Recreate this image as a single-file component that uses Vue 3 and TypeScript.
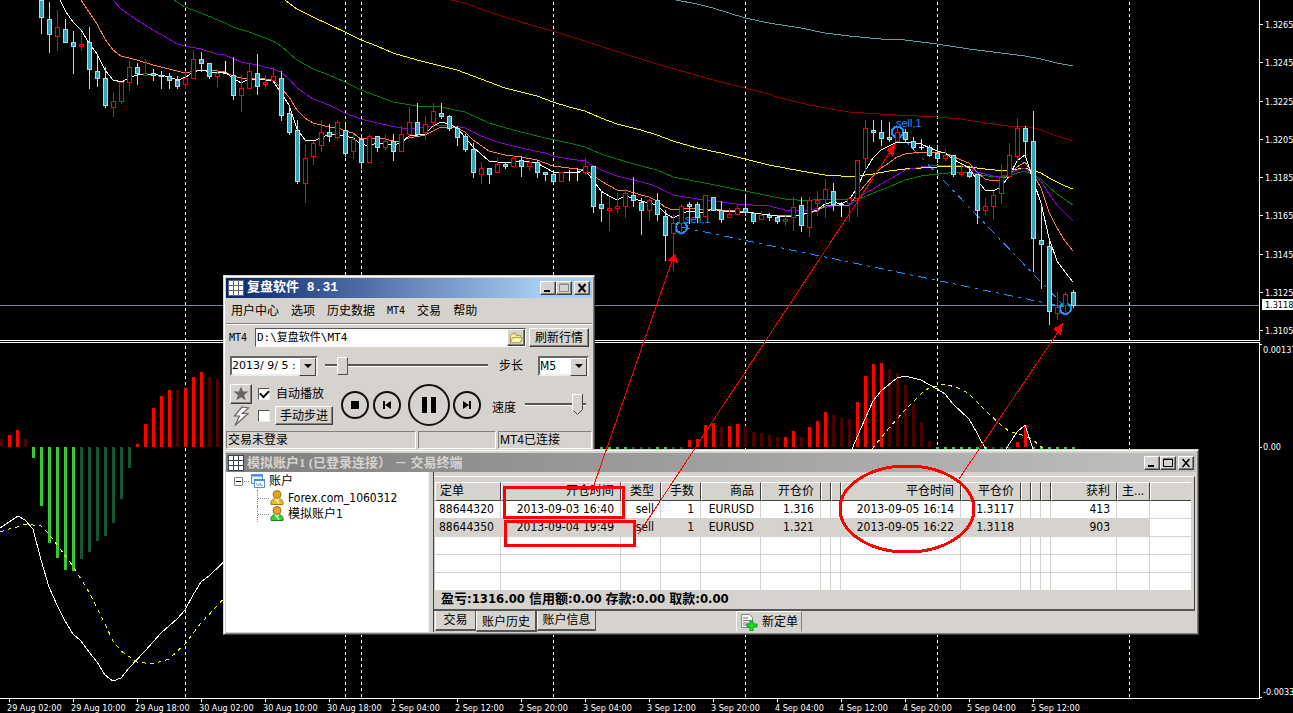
<script setup lang="ts">
import { ref } from 'vue'

type Candle = [x: number, high: number, top: number, bottom: number, low: number, kind: 'r' | 'b' | 'w']
type Bar = [x: number, y: number, kind: string]

const candleSource = `41 0 0 17 33 b;49 2 19 34 52 b;57 10 27 36 50 r;65 19 29 42 42 b;73 31 42 46 73 b;81 33 44 46 50 r;89 27 42 69 88 b;97 55 71 78 86 b;105 67 78 105 107 b;113 92 101 107 116 r;121 82 82 101 103 r;129 61 67 82 90 r;137 63 67 73 84 b;145 59 73 75 75 r;153 69 73 75 80 b;161 71 75 76 88 b;169 73 76 80 88 b;177 76 80 86 88 b;185 71 78 84 88 r;193 50 59 78 78 r;201 52 59 63 71 b;209 63 63 76 78 b;217 69 73 76 86 r;225 61 73 73 73 w;233 57 75 95 99 b;241 75 88 95 111 r;249 63 71 88 88 r;257 54 73 86 94 b;265 75 82 84 88 r;273 67 76 80 80 r;281 71 78 115 120 b;289 105 113 132 134 b;297 120 130 181 183 b;305 145 158 183 202 r;313 141 143 156 164 r;321 120 132 145 151 r;329 124 132 136 141 b;337 120 122 137 139 r;345 125 130 153 156 b;353 134 139 151 158 r;361 136 139 162 168 b;369 134 136 162 162 r;377 136 136 147 151 b;385 134 141 147 149 r;393 134 141 151 160 b;401 126 134 151 151 r;409 107 122 134 136 r;417 103 122 134 136 b;425 116 124 132 139 r;433 103 111 122 128 r;441 103 113 116 118 b;449 115 116 128 130 b;457 126 128 137 145 b;465 134 136 149 151 b;473 143 149 172 177 b;481 162 168 174 183 r;489 168 168 174 183 b;497 158 164 172 172 r;505 162 164 166 168 b;513 156 158 166 166 r;521 156 160 166 176 b;529 160 162 166 170 r;537 160 162 172 177 b;545 172 172 174 180 b;553 170 174 181 181 b;561 172 172 181 181 r;569 170 172 172 180 w;577 168 172 172 180 w;585 158 166 172 174 r;593 166 166 206 212 b;601 191 204 208 221 b;609 197 208 210 230 r;617 193 206 208 212 r;625 189 193 206 217 r;633 177 195 200 206 b;641 198 202 210 234 b;649 197 200 210 220 r;657 193 200 214 220 b;665 210 216 235 260 b;673 214 223 233 270 r;681 204 206 223 234 r;689 202 204 206 223 b;697 202 204 217 222 b;705 195 195 216 216 r;713 197 197 210 210 b;721 201 210 219 222 b;729 208 214 217 217 r;737 206 208 214 214 r;745 197 208 212 215 b;753 212 213 221 223 b;761 211 215 219 219 r;769 213 215 217 220 b;777 216 217 221 223 b;785 214 219 221 225 r;793 197 207 217 230 r;801 197 205 225 231 b;809 197 200 227 236 r;817 191 200 203 215 r;825 179 189 199 217 r;833 183 191 204 210 b;841 202 204 204 216 w;849 197 198 203 221 r;857 160 160 198 216 r;865 120 128 158 171 r;873 120 130 132 141 b;881 120 132 138 145 b;889 122 137 139 141 b;897 126 132 141 141 r;905 129 132 139 142 b;913 137 141 147 149 b;921 139 147 147 149 w;929 145 147 155 156 b;937 145 153 158 162 b;945 149 155 158 160 r;953 155 155 174 176 b;961 164 172 174 176 r;969 166 172 176 177 b;977 174 174 210 223 b;985 198 206 210 214 r;993 191 195 206 219 r;1001 164 177 193 203 r;1009 143 155 176 176 r;1017 118 128 156 161 r;1025 126 128 141 155 b;1033 111 141 238 271 b;1041 203 240 244 288 b;1049 240 246 311 324 b;1057 292 307 313 319 r;1065 292 294 305 313 r;1073 290 292 305 307 b`
const candles: Candle[] = candleSource.split(';').map((row) => {
  const p = row.split(' ')
  return [+p[0], +p[1], +p[2], +p[3], +p[4], p[5] as Candle[5]]
})

const averages = [
  { name: 'cadet', points: '676,0 697,4 713,8 729,13 745,18 769,23 801,28 825,33 849,36 881,39 905,40 937,44 969,49 1001,53 1025,56 1041,59 1057,63 1073,66' },
  { name: 'maroon', points: '451,0 465,3 489,12 521,22 545,29 553,31 585,41 609,49 641,59 657,64 713,80 745,88 769,94 777,97 809,105 849,112 897,115 937,117 961,119 985,123 1009,126 1025,126 1041,130 1057,136 1073,141' },
  { name: 'yellow', points: '285,0 297,9 313,17 330,25 345,32 361,40 377,46 393,53 417,60 441,66 457,70 473,76 489,82 505,88 537,96 553,102 569,107 585,111 601,118 617,124 641,130 657,135 673,141 697,148 721,153 745,159 769,165 801,171 825,175 841,176 857,176 873,174 889,171 905,169 937,167 961,166 985,169 1005,171 1025,168 1041,173 1049,178 1065,186 1073,189' },
  { name: 'green', points: '174,0 185,7 201,13 225,23 233,27 249,32 273,41 281,46 297,60 313,69 329,75 345,82 361,90 377,96 393,102 417,106 441,107 465,112 489,123 513,130 545,138 569,143 585,147 601,154 617,159 641,166 657,170 673,177 705,183 745,191 785,199 809,201 817,199 849,200 857,200 873,193 889,187 905,180 921,176 937,174 961,172 977,174 993,177 1009,176 1017,173 1025,171 1033,175 1041,179 1049,187 1057,194 1073,205' },
  { name: 'purple', points: '113,0 121,9 137,20 153,30 169,39 177,44 185,46 201,49 217,54 225,55 241,62 257,65 273,69 281,72 289,79 297,88 313,99 329,105 345,113 361,119 377,123 401,128 417,128 433,126 449,125 465,128 481,136 497,142 521,148 545,153 553,156 569,159 585,161 601,170 617,176 641,182 649,184 657,187 673,195 697,199 713,201 737,204 769,206 785,210 809,210 833,206 849,205 857,200 865,193 873,189 881,184 897,175 905,170 921,167 937,165 961,165 977,172 993,176 1001,176 1009,175 1017,170 1025,168 1033,175 1041,181 1049,194 1057,205 1065,213 1073,221' },
  { name: 'coral', points: '81,0 89,12 97,24 105,39 113,50 121,56 137,60 153,65 169,69 185,73 201,70 217,71 225,72 233,76 241,78 257,78 273,80 281,88 289,97 297,110 305,118 313,123 329,127 337,127 345,131 353,133 361,139 369,138 385,139 397,142 409,138 425,135 433,131 441,127 457,128 465,132 473,140 489,151 505,155 521,157 537,160 553,166 569,168 585,170 593,175 601,181 617,190 625,190 641,195 649,197 657,201 665,207 673,210 689,208 697,209 721,210 737,211 753,213 769,215 801,215 817,211 825,206 849,205 857,195 865,185 873,176 881,168 889,163 897,157 905,154 921,152 945,153 961,160 969,163 977,172 985,179 993,181 1001,180 1009,175 1017,167 1025,162 1033,174 1041,188 1049,212 1057,228 1065,241 1073,251' },
  { name: 'white', points: '60,0 66,12 73,22 81,30 89,43 97,54 105,70 113,80 122,82 130,77 138,75 150,74 165,76 178,80 186,77 193,72 201,70 212,72 225,72 233,78 241,83 249,79 265,80 273,81 281,93 289,105 297,129 305,140 313,141 321,138 329,134 345,136 353,138 361,144 369,146 377,143 393,145 401,143 409,136 425,134 433,126 441,122 449,124 457,128 465,137 473,147 481,154 489,161 505,163 520,161 537,163 553,172 561,173 577,172 585,170 593,180 601,191 609,196 617,200 625,196 633,198 641,201 649,203 657,205 665,213 673,218 681,214 689,211 697,212 705,212 713,209 721,211 737,212 753,213 769,215 785,217 801,215 817,210 825,204 833,202 841,204 849,200 857,188 865,171 873,158 881,150 889,146 897,142 909,142 921,144 937,151 945,153 953,159 969,168 977,180 985,190 993,191 1001,187 1009,176 1017,161 1025,155 1028,164 1033,180 1041,203 1049,238 1057,261 1065,272 1073,282' },
]

const barSource = `1 439 d;9 435 r;17 430 r;25 439 d;33 458 g;41 506 g;49 543 g;57 558 g;65 570 g;73 571 g;81 559 f;89 552 f;97 541 f;105 536 f;113 523 f;121 499 f;129 468 f;137 444 r;145 424 r;153 408 r;161 396 r;169 390 r;177 390 d;185 388 r;193 377 r;201 372 r;209 377 d;217 379 d;601 449 g;609 449 g;617 449 g;625 449 g;633 449 f;641 449 f;649 449 f;657 449 g;665 449 g;673 449 f;681 449 f;689 440 r;697 439 r;705 425 r;713 423 r;721 427 d;729 426 r;737 424 r;745 426 d;753 432 d;761 433 d;769 435 d;777 437 d;785 437 r;793 431 r;801 437 d;809 427 r;817 421 r;825 412 r;833 415 d;841 418 d;849 419 d;857 402 r;865 376 r;873 364 r;881 363 r;889 369 d;897 373 d;905 385 d;913 404 d;921 422 d;929 441 d;937 449 g;945 449 g;953 449 g;961 449 g;969 449 g;977 449 g;985 449 g;993 449 f;1001 449 f;1009 449 f;1017 442 r;1025 425 r;1033 449 g;1041 449 g;1049 449 g;1057 449 g;1065 449 g;1073 449 g`
const bars: Bar[] = barSource.split(';').map((row) => {
  const p = row.split(' ')
  return [+p[0], +p[1], p[2]]
})

const sessions = [185, 345, 361, 553, 745, 937, 1129]
const prices = ['1.3265', '1.3245', '1.3225', '1.3205', '1.3185', '1.3165', '1.3145', '1.3125', '1.3105'].map((label, i) => ({
  label,
  y: Math.round(24 + i * 38.25),
}))
const times = [
  '29 Aug 02:00', '29 Aug 10:00', '29 Aug 18:00', '30 Aug 02:00', '30 Aug 10:00', '30 Aug 18:00',
  '2 Sep 04:00', '2 Sep 12:00', '2 Sep 20:00', '3 Sep 04:00', '3 Sep 12:00', '3 Sep 20:00',
  '4 Sep 04:00', '4 Sep 12:00', '4 Sep 20:00', '5 Sep 04:00', '5 Sep 12:00',
]

const menu = ['用户中心', '选项', '历史数据', 'MT4', '交易', '帮助']
const path = ref('D:\\复盘软件\\MT4')
const progress = ref(8)
const speed = ref(94)
const autoPlay = ref(true)
const manual = ref(false)

const columns: { title: string; width: number }[] = [
  { title: '定单', width: 66 }, { title: '开仓时间', width: 120 }, { title: '类型', width: 40 },
  { title: '手数', width: 40 }, { title: '商品', width: 60 }, { title: '开仓价', width: 60 },
  { title: '', width: 10 }, { title: '', width: 10 }, { title: '平仓时间', width: 120 },
  { title: '平仓价', width: 60 }, { title: '', width: 10 }, { title: '', width: 10 },
  { title: '', width: 10 }, { title: '获利', width: 66 }, { title: '主...', width: 33 }, { title: '', width: 0 },
]
const blank = Array<string>(16).fill('')
const orders = [
  ['88644320', '2013-09-03 16:40', 'sell', '1', 'EURUSD', '1.316', '', '', '2013-09-05 16:14', '1.3117', '', '', '', '413', '', ''],
  ['88644350', '2013-09-04 19:49', 'sell', '1', 'EURUSD', '1.321', '', '', '2013-09-05 16:22', '1.3118', '', '', '', '903', '', ''],
  blank, blank, blank,
]
</script>

<template>
  <main class="desktop">
    <svg class="chart" viewBox="0 0 1293 713" preserveAspectRatio="xMinYMin meet" role="img" aria-label="EURUSD">
      <g class="sessions">
        <path v-for="x in sessions" :key="x" :d="`M${x + 0.5} 2V340M${x + 0.5} 346V698`" />
      </g>
      <path class="bid" d="M0 305.5H1259" />
      <g class="orders">
        <path class="route" d="M681 227L1065 307" />
        <path class="route" d="M897 132L1065 307" />
        <circle cx="681.5" cy="227.5" r="5.500" />
        <circle cx="897.5" cy="132" r="5.500" />
        <circle cx="1065.5" cy="308.5" r="5.500" />
        <text x="685" y="223">sell,1</text>
        <text x="896" y="127">sell,1</text>
      </g>
      <polyline v-for="line in averages" :key="line.name" class="average" :class="line.name" :points="line.points" />
      <g v-for="c in candles" :key="c[0]" :class="['candle', c[5]]">
        <rect class="wick" :x="c[0]" :y="c[1]" width="1" :height="c[4] - c[1] + 1" />
        <rect v-if="c[5] === 'w'" class="wick" :x="c[0] - 2" :y="c[2]" width="5" height="1" />
        <rect v-else class="body" :x="c[0] - 1.5" :y="c[2] + 0.5" width="4" :height="c[3] - c[2]" />
      </g>
      <rect
        v-for="b in bars"
        :key="b[0]"
        :class="['bar', b[2]]"
        :x="b[0] - 1"
        :y="Math.min(447, b[1])"
        width="3"
        :height="Math.abs(b[1] - 447)"
      />
      <g class="macd">
        <polyline points="0,528 9,522 18,516 25,520 33,529 41,560 49,587 57,605 65,621 73,634 81,641 89,652 97,662 105,675 113,681 121,678 129,668 145,651 161,633 177,619 185,610 193,595 201,582 209,576 230,556" />
        <polyline points="852,449 861,428 873,401 881,391 897,378 905,376 921,380 937,389 945,394 953,404 969,419 977,433 981,441 986,449" />
        <polyline points="1006,449 1017,432 1025,425 1033,449" />
      </g>
      <g class="signal">
        <polyline points="0,532 9,529 17,527 25,524 41,526 49,534 57,545 73,566 89,592 105,624 113,641 121,651 137,662 153,664 169,659 185,644 201,623 230,592" />
        <polyline points="872,449 889,428 905,410 921,394 929,388 945,384 961,389 969,394 985,410 1001,425 1009,431 1025,436 1033,440 1044,449" />
      </g>
      <path class="frame" d="M0 340.5H1259.5V0M0 342.5H1259.5V698.5H0" />
      <g class="ticks">
        <path v-for="p in prices" :key="p.label" :d="`M1260 ${p.y + 0.5}h3`" />
        <path d="M1260 344.5h2M1260 447.5h2M1260 697.5h2" />
        <path v-for="(t, i) in times" :key="t" :d="`M${9.5 + i * 64} 699v3`" />
      </g>
      <g class="labels">
        <text v-for="p in prices" :key="p.label" x="1265" :y="p.y + 4">{{ p.label }}</text>
        <text x="1263" y="353">0.00137</text>
        <text x="1263" y="450">0.00</text>
        <text x="1263" y="695">-0.0033</text>
        <text v-for="(t, i) in times" :key="t" :x="7 + i * 64" y="711">{{ t }}</text>
        <rect x="1262" y="299" width="31" height="11" />
        <text class="current" x="1265" y="308">1.3118</text>
      </g>
    </svg>

    <section class="window player">
      <header class="title">
        <svg class="grid-icon" viewBox="0 0 16 16"><path d="M0 0h16v16H0z" fill="#5a6672" /><path d="M1 1h4v4H1zM6 1h4v4H6zM11 1h4v4h-4zM1 6h4v4H1zM6 6h4v4H6zM11 6h4v4h-4zM1 11h4v4H1zM6 11h4v4H6zM11 11h4v4h-4z" fill="#fff" /></svg>
        <h1>复盘软件 8.31</h1>
        <div class="caption-buttons">
          <button aria-label="最小化"><svg viewBox="0 0 12 10"><path d="M2 7h6v2H2z" /></svg></button>
          <button aria-label="最大化" class="off"><svg viewBox="0 0 12 10"><path d="M1.500 1H10.500V8.500H1.500zM1 1.500h10" fill="none" stroke="#888" /></svg></button>
          <button aria-label="关闭" class="close"><svg viewBox="0 0 12 10"><path d="M2.500 1L9.500 9M9.500 1L2.500 9" stroke="#000" stroke-width="2" /></svg></button>
        </div>
      </header>
      <nav class="menu">
        <button v-for="m in menu" :key="m">{{ m }}</button>
      </nav>
      <div class="path-row">
        <label for="path">MT4</label>
        <div class="path-box">
          <input id="path" v-model="path" type="text" />
          <button class="browse" aria-label="浏览">
            <svg viewBox="0 0 16 14"><path d="M1.500 12V4l2-2h4l1 2h5v2" fill="#f5ee9c" stroke="#9a9236" /><path d="M1.500 12.500L4 6.500h11.500l-2.500 6z" fill="#fbf5b5" stroke="#9a9236" /></svg>
          </button>
        </div>
        <button class="raised refresh">刷新行情</button>
      </div>
      <div class="time-row">
        <span class="combo date"><select aria-label="日期"><option>2013/ 9/ 5 :</option></select></span>
        <input v-model="progress" class="track" type="range" aria-label="进度" />
        <label for="step">步长</label>
        <span class="combo step"><select id="step"><option>M5</option></select></span>
      </div>
      <div class="play-row">
        <div class="modes">
          <button class="raised star" aria-label="收藏"><svg viewBox="0 0 16 16"><path d="M8 0.500l2 5h5.500l-4.400 3.400 1.700 5.600L8 11.200l-4.800 3.300 1.700-5.600L0.500 5.500H6z" fill="#666" /></svg></button>
          <input id="auto" v-model="autoPlay" type="checkbox" />
          <label for="auto">自动播放</label>
          <svg class="bolt" viewBox="0 0 20 22"><path d="M11 2L3.500 11h5L4 20.500 17 8.500h-5.500L17.500 3z" fill="#fff" stroke="#666" stroke-width="1.200" /></svg>
          <input v-model="manual" type="checkbox" aria-label="手动步进" />
          <button class="raised manual">手动步进</button>
        </div>
        <div class="transport">
          <button aria-label="停止"><svg width="28" height="28" viewBox="0 0 28 28"><circle cx="14" cy="14" r="13" /><path d="M10 10h8v8h-8z" /></svg></button>
          <button aria-label="上一步"><svg width="28" height="28" viewBox="0 0 28 28"><circle cx="14" cy="14" r="13" /><path d="M10 10h2v8h-2zM18 10v8l-6-4z" /></svg></button>
          <button aria-label="暂停"><svg width="42" height="42" viewBox="0 0 42 42"><circle cx="21" cy="21" r="20" /><path d="M14 13h5v16h-5zM23 13h5v16h-5z" /></svg></button>
          <button aria-label="下一步"><svg width="28" height="28" viewBox="0 0 28 28"><circle cx="14" cy="14" r="13" /><path d="M16 10h2v8h-2zM10 10v8l6-4z" /></svg></button>
        </div>
        <label for="speed">速度</label>
        <input id="speed" v-model="speed" class="track pointed" type="range" />
      </div>
      <footer class="status"><span>交易未登录</span><span></span><span>MT4已连接</span></footer>
    </section>

    <section class="window terminal">
      <header class="title inactive">
        <svg class="grid-icon" viewBox="0 0 16 16"><path d="M0 0h16v16H0z" fill="#39424c" /><path d="M1 1h4v4H1zM6 1h4v4H6zM11 1h4v4h-4zM1 6h4v4H1zM6 6h4v4H6zM11 6h4v4h-4zM1 11h4v4H1zM6 11h4v4H6zM11 11h4v4h-4z" fill="#fff" /></svg>
        <h2>模拟账户1 (已登录连接） － 交易终端</h2>
        <div class="caption-buttons">
          <button aria-label="最小化"><svg viewBox="0 0 12 10"><path d="M2 7h6v2H2z" /></svg></button>
          <button aria-label="最大化"><svg viewBox="0 0 12 10"><path d="M1.500 1H10.500V8.500H1.500zM1 1.500h10" fill="none" stroke="#000" /></svg></button>
          <button aria-label="关闭" class="close"><svg viewBox="0 0 12 10"><path d="M2.500 1L9.500 9M9.500 1L2.500 9" stroke="#000" stroke-width="1.500" /></svg></button>
        </div>
      </header>
      <div class="content">
        <aside class="tree">
          <div class="node">
            <svg class="toggle" viewBox="0 0 16 18"><path d="M0.500 5.500h8v8h-8z" fill="#fff" stroke="#808080" /><path d="M2 9.500h5" stroke="#000" /><path d="M10 9.500h6" stroke="#888" stroke-dasharray="1 1" /></svg>
            <svg class="pic" viewBox="0 0 16 16"><path d="M1.500 1.500h11v9h-11z" fill="#e6f1fc" stroke="#4c8fd6" /><path d="M1 2.500h12" stroke="#4c8fd6" stroke-width="2" /><path d="M4.500 6.500h10v8h-10z" fill="#fff" stroke="#4c8fd6" /><path d="M4 7h11" stroke="#4c8fd6" stroke-width="2" /><path d="M6 10l2 3 2-3 1 3 2-1" fill="none" stroke="#6aa2da" /></svg>
            <span>账户</span>
          </div>
          <ul>
            <li>
              <svg class="pic" viewBox="0 0 16 16"><circle cx="8" cy="4.500" r="4" fill="#dba520" stroke="#a8780a" /><path d="M2 14.500C1.500 10 4 8.500 8 8.500s6.500 1.500 6 6z" fill="#e9bd2c" stroke="#a8780a" /><path d="M6 8.500l4 5M10 8.500l-2 2" stroke="#fff3b0" stroke-width="1.500" /></svg>
              <span>Forex.com_1060312</span>
            </li>
            <li>
              <svg class="pic" viewBox="0 0 16 16"><circle cx="8" cy="4.500" r="4" fill="#e8a32b" stroke="#a86a0a" /><path d="M2 14.500C1.500 10 4 8.500 8 8.500s6.500 1.500 6 6z" fill="#2bd42b" stroke="#118a18" /><path d="M6 8.500l4 5M10 8.500l-2 2" stroke="#e9ffd8" stroke-width="1.500" /></svg>
              <span>模拟账户1</span>
            </li>
          </ul>
        </aside>
        <div class="right">
          <div class="panel">
            <table>
              <colgroup><col v-for="(c, i) in columns" :key="i" :style="c.width ? { width: c.width + 'px' } : {}" /></colgroup>
              <thead><tr><th v-for="(c, i) in columns" :key="i">{{ c.title }}</th></tr></thead>
              <tbody>
                <tr v-for="(row, r) in orders" :key="r" :class="{ selected: r === 1 }">
                  <td v-for="(cell, i) in row" :key="i">{{ cell }}</td>
                </tr>
              </tbody>
            </table>
            <p class="summary">盈亏:1316.00 信用额:0.00 存款:0.00 取款:0.00</p>
          </div>
          <div class="tabs">
            <button class="tab">交易</button>
            <button class="tab active">账户历史</button>
            <button class="tab last">账户信息</button>
            <button class="new-order">
              <svg viewBox="0 0 18 18"><path d="M1.500 1.500h8l3 3v10h-11z" fill="#f5f5f5" stroke="#8a8a8a" /><path d="M3 5h5M3 7.500h8M3 10h6M3 12h4" stroke="#777" /><path d="M10 8h3v3h4v3h-4v4h-3v-4H7v-3h3z" fill="#1fdc2a" stroke="#0c9a18" /></svg>
              <span>新定单</span>
            </button>
          </div>
        </div>
      </div>
    </section>

    <svg class="marks" viewBox="0 0 1293 713" preserveAspectRatio="xMinYMin meet" aria-hidden="true">
      <path class="arrow" d="M590.500 495L673 258M638.500 534L892 149M959 479L1060 329" />
      <path class="head" d="M675 253L668 261 678 263zM896 143L886 150 893 156zM1063 323L1053 329 1061 335z" />
      <rect x="504.5" y="487.5" width="119" height="30" />
      <rect x="505.5" y="521.5" width="129" height="24" />
      <ellipse cx="907" cy="509" rx="67" ry="43" />
    </svg>
  </main>
</template>

<style>
html,
body {
  background: #000;
}
</style>

<style scoped>
* {
  box-sizing: border-box;
}
.desktop {
  position: relative;
  min-height: 100vh;
  overflow: hidden;
  background: #000;
  color: #000;
  font: 12px/16px 'DejaVu Sans Condensed', 'Noto Sans CJK SC', sans-serif;
}
.chart,
.marks {
  display: block;
  width: 100%;
  shape-rendering: crispEdges;
}
.marks {
  position: absolute;
  inset: 0;
  fill: none;
  stroke: #f00;
  stroke-width: 3;
  pointer-events: none;
}
.arrow {
  stroke-width: 1;
}
.head {
  fill: #f00;
  stroke: none;
}
.sessions {
  stroke: #fff;
  stroke-dasharray: 3 3;
  fill: none;
}
.bid {
  stroke: #778899;
}
.orders {
  fill: none;
  stroke: #1e90ff;
  stroke-width: 2;
}
.orders text {
  fill: #1e90ff;
  stroke: none;
  font: 11px 'Liberation Sans', sans-serif;
}
.route {
  stroke-width: 1;
  stroke-dasharray: 9 5 3 5;
}
.average,
.macd,
.signal {
  fill: none;
  stroke-width: 1;
}
.cadet { stroke: #5f9ea0; }
.maroon { stroke: #8b0000; }
.yellow { stroke: #ff0; }
.green { stroke: #008000; }
.purple { stroke: #9400d3; }
.coral { stroke: #ff7f50; }
.white { stroke: #fff; }
.candle.r .wick { fill: #f00; }
.candle.r .body { fill: #000; stroke: #f00; }
.candle.b .wick { fill: #b0e0e6; }
.candle.b .body { fill: #35a5b8; stroke: #b0e0e6; }
.candle.w .wick { fill: #fff; }
.bar.r { fill: #f00; }
.bar.d { fill: #500000; }
.bar.g { fill: #32cd32; }
.bar.f { fill: #145532; }
.macd { stroke: #fff; }
.signal { stroke: #ff0; stroke-dasharray: 4 4; }
.frame,
.ticks {
  fill: none;
  stroke: #fff;
}
.labels {
  fill: #fff;
  font: 9px 'DejaVu Sans Condensed', sans-serif;
}
.labels .current {
  fill: #000;
}

.window {
  position: absolute;
  left: 223px;
  background: #d6d3ce;
  border: 1px solid #d6d3ce;
  border-right-color: #404040;
  border-bottom-color: #404040;
  box-shadow: inset 1px 1px #fff, inset -1px -1px #808080;
  padding: 2px;
}
.player {
  top: 275px;
  width: 372px;
}
.terminal {
  top: 449px;
  width: 976px;
  padding-top: 3px;
}
button,
input,
select {
  font: inherit;
  color: inherit;
  margin: 0;
  padding: 0;
  border: 0;
  border-radius: 0;
  background: none;
}
.title {
  display: flex;
  align-items: center;
  gap: 3px;
  height: 20px;
  padding: 0 2px;
  color: #fff;
  background: linear-gradient(to right, #0a246a, #a6caf0 85%);
}
.title.inactive {
  height: 19px;
  color: #d6d3ce;
  background: linear-gradient(to right, #808080, #c0c0c0);
}
.title h1,
.title h2 {
  flex: 1;
  margin: 0;
}
.title h1 {
  font: bold 13px/18px 'Liberation Mono', 'Noto Sans CJK SC', monospace;
}
.title h2 {
  font: bold 13px/18px 'Liberation Serif', 'Noto Sans CJK SC', serif;
}
.grid-icon {
  width: 16px;
  height: 16px;
}
.caption-buttons {
  display: flex;
}
.caption-buttons button,
.raised,
.browse {
  display: flex;
  align-items: center;
  justify-content: center;
  background: #d6d3ce;
  border: 1px solid;
  border-color: #fff #404040 #404040 #fff;
  box-shadow: inset -1px -1px #808080;
}
.caption-buttons button {
  width: 16px;
  height: 14px;
}
.caption-buttons svg {
  width: 12px;
  height: 10px;
}
.caption-buttons .close {
  margin-left: 2px;
}
.menu {
  display: flex;
  gap: 12px;
  height: 26px;
  padding: 0 5px;
  font-family: 'DejaVu Sans Mono', 'Noto Sans CJK SC', monospace;
  border-bottom: 1px solid #808080;
  box-shadow: 0 1px #fff;
}
.menu button:nth-child(4) {
  font-size: 10px;
}
.path-row {
  display: flex;
  align-items: center;
  gap: 3px;
  padding: 4px 3px 0;
}
.path-row label {
  width: 23px;
  font: 10px/16px 'DejaVu Sans Mono', monospace;
}
.path-box {
  display: flex;
  flex: 1;
  height: 19px;
  background: #fff;
  border: 1px solid;
  border-color: #555 #fff #fff #555;
}
.path-box input {
  flex: 1;
  min-width: 0;
  padding-left: 1px;
  font: 11px/16px 'DejaVu Sans Mono', 'Noto Sans CJK SC', monospace;
  outline: 0;
}
.browse {
  width: 18px;
}
.browse svg {
  width: 14px;
  height: 12px;
}
.refresh {
  width: 60px;
  height: 19px;
}
.time-row {
  display: flex;
  align-items: center;
  height: 32px;
  padding: 6px 3px 0 4px;
}
.time-row label {
  width: 29px;
  margin: 0 10px 0 11px;
}
.combo {
  position: relative;
  display: flex;
  height: 20px;
  background: #fff;
  border: 2px solid;
  border-color: #666 #eee #eee #666;
}
.combo::before {
  content: '';
  position: absolute;
  right: 0;
  top: 0;
  width: 15px;
  height: 16px;
  background: #d6d3ce;
  border: 1px solid;
  border-color: #fff #404040 #404040 #fff;
  pointer-events: none;
}
.combo::after {
  content: '';
  position: absolute;
  right: 4px;
  top: 6px;
  border: 4px solid transparent;
  border-top-color: #000;
  border-bottom: 0;
  pointer-events: none;
}
.combo select {
  width: 100%;
  appearance: none;
}
.date {
  width: 88px;
  margin-right: 7px;
}
.date select {
  font: 11px/16px 'DejaVu Sans', sans-serif;
}
.step {
  width: 51px;
}
.track {
  appearance: none;
  flex: 1;
  min-width: 0;
  height: 22px;
  background: linear-gradient(#555, #555) 0 9px / 100% 2px no-repeat, linear-gradient(#fff, #fff) 0 11px / 100% 1px no-repeat;
}
.track::-webkit-slider-thumb {
  appearance: none;
  width: 11px;
  height: 18px;
  background: #d6d3ce;
  border: 1px solid;
  border-color: #fff #555 #555 #fff;
}
.pointed::-webkit-slider-thumb {
  height: 22px;
  border: 0;
  background: url("data:image/svg+xml,%3Csvg xmlns='http://www.w3.org/2000/svg' viewBox='0 0 11 22'%3E%3Cpath d='M.5 .5h10v15l-5 5-5-5z' fill='%23d6d3ce'/%3E%3Cpath d='M10 .5H.5v15l5 5' fill='none' stroke='%23fff'/%3E%3Cpath d='M10.500 0v15.500l-5 5-4-4' fill='none' stroke='%23444'/%3E%3C/svg%3E") center / 11px 22px no-repeat;
}
.play-row {
  display: flex;
  align-items: center;
  height: 52px;
  padding: 0 6px 0 4px;
}
.modes {
  display: grid;
  grid-template-columns: 22px 13px 59px;
  grid-template-rows: 21px 22px;
  column-gap: 5px;
  align-items: center;
}
.modes label {
  padding-left: 1px;
}
.modes input {
  appearance: none;
  width: 12px;
  height: 12px;
  margin-left: 1px;
  background: #fff;
  border: 1px solid;
  border-color: #555 #eee #eee #555;
}
.modes input:checked::before {
  content: '';
  display: block;
  width: 7px;
  height: 4px;
  margin: 1px;
  border: solid #000;
  border-width: 0 0 2px 2px;
  rotate: -45deg;
}
.star {
  height: 20px;
}
.star svg {
  width: 16px;
  height: 16px;
}
.bolt {
  width: 22px;
  height: 22px;
}
.manual {
  width: 58px;
  height: 19px;
}
.transport {
  display: flex;
  align-items: center;
  gap: 4px;
  margin: 0 11px 0 7px;
}
.transport button:nth-child(3) {
  margin: 0 -1px 0 3px;
}
.transport svg {
  display: block;
}
.transport circle {
  fill: none;
  stroke: #111;
  stroke-width: 2;
}
.play-row > label {
  width: 33px;
  padding-top: 6px;
}
.status {
  display: flex;
  gap: 2px;
}
.status span {
  height: 18px;
  padding-left: 1px;
  border: 1px solid;
  border-color: #808080 #fff #fff #808080;
}
.status span:nth-child(1) {
  width: 190px;
}
.status span:nth-child(2) {
  width: 78px;
}
.status span:nth-child(3) {
  flex: 1;
  font-family: 'Liberation Sans', 'Noto Sans CJK SC', sans-serif;
}

.content {
  display: flex;
  gap: 4px;
}
.tree {
  width: 203px;
  padding: 0 2px 0 8px;
  background: #fff;
  border-right: 1px solid #eee;
}
.node,
.tree li {
  display: flex;
  align-items: center;
  height: 16px;
}
.tree .node {
  height: 18px;
}
.toggle {
  width: 16px;
  height: 18px;
}
.pic {
  width: 16px;
  height: 16px;
}
.node span {
  padding-left: 3px;
}
.tree ul {
  margin: 0 0 0 23px;
  padding: 0;
  list-style: none;
}
.tree li {
  border-left: 1px dotted #888;
}
.tree li::before {
  content: '';
  width: 11px;
  border-top: 1px dotted #888;
}
.tree li span {
  padding-left: 3px;
}
.right {
  flex: 1;
  min-width: 0;
  padding: 4px 1px 0 0;
  border-left: 1px solid #404040;
}
.panel {
  padding: 5px 3px 0 1px;
  border: solid;
  border-width: 1px 1px 2px 0;
  border-color: #fff #404040 #555 #fff;
}
table {
  width: 100%;
  table-layout: fixed;
  border-collapse: separate;
  border-spacing: 0;
  background: #fff;
}
th,
td {
  height: 18px;
  padding: 0 6px 0 0;
  overflow: hidden;
  font-weight: normal;
  line-height: 17px;
  text-align: right;
  white-space: nowrap;
  border-right: 1px solid #d6d3ce;
  border-bottom: 1px solid #d6d3ce;
}
th {
  background: #d6d3ce;
  border: 1px solid;
  border-color: #fff #404040 #404040 #fff;
}
th:first-child,
td:first-child {
  padding: 0 0 0 4px;
  text-align: left;
}
th:nth-child(15) {
  padding: 0 0 0 4px;
  text-align: left;
}
th:last-child,
td:last-child {
  padding: 0;
  border-right: 0;
}
th:empty,
td:empty {
  padding: 0;
}
.selected td:not(:last-child) {
  background: #d6d3ce;
}
.summary {
  margin: 0;
  padding: 0 6px 2px;
  font-size: 13px;
  font-weight: bold;
}
.tabs {
  display: flex;
  align-items: flex-start;
  padding-left: 1px;
}
.tab {
  width: 41px;
  height: 20px;
  border: solid;
  border-width: 0 1px 2px;
  border-color: #fff #555 #555 #fff;
}
.tab.active {
  width: 61px;
  height: 21px;
  padding-top: 3px;
  border-right-width: 2px;
}
.tab.last {
  width: 59px;
}
.new-order {
  display: flex;
  align-items: center;
  gap: 4px;
  width: 66px;
  height: 21px;
  margin-left: 140px;
  padding-left: 3px;
  border: 1px solid;
  border-color: #fff #808080 #d6d3ce #fff;
  white-space: nowrap;
}
.new-order svg {
  flex: none;
  width: 18px;
  height: 18px;
}
</style>
